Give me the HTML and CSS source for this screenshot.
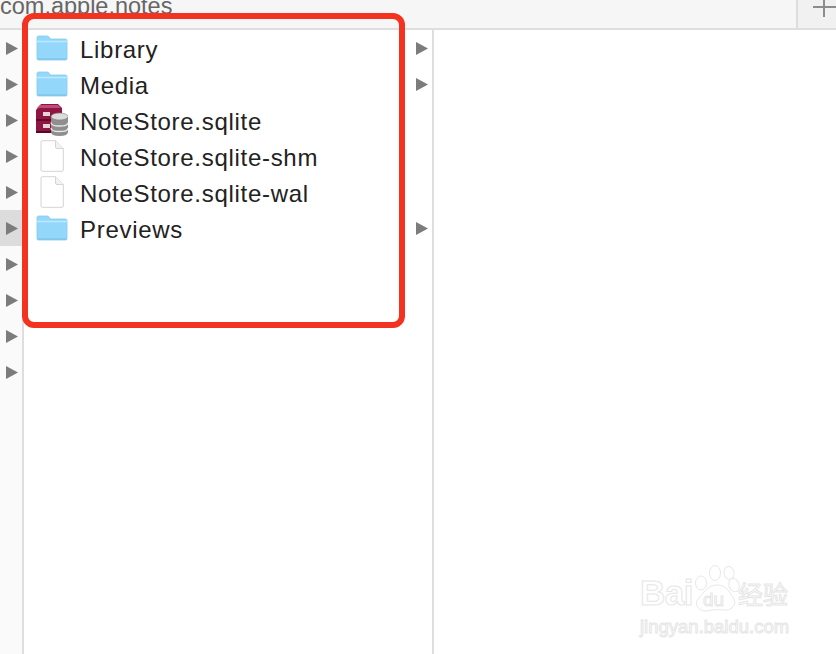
FILE: index.html
```html
<!DOCTYPE html>
<html>
<head>
    <meta charset="utf-8">
    <title>com.apple.notes</title>
    <link rel="stylesheet" href="styles.css">
</head>
<body>
    <svg class="sprites" width="0" height="0">
        <symbol id="arrow" viewBox="0 0 12 13"><path d="M0 0L12 6.5L0 13Z" fill="#7c7c7c"/></symbol>
        <symbol id="folder" viewBox="0 0 32 26">
            <path d="M1 5V2.5Q1 1 2.5 1H11Q12.500 1 13.500 2.500L14.500 4H29.500Q31 4 31 5.500V23.500Q31 25 29.500 25H2.500Q1 25 1 23.500Z" fill="#93d8fb" stroke="#84cbee" stroke-width=".8"/>
            <path d="M1 6.500H31" stroke="#bde9fd" stroke-width="1.500"/>
            <path d="M1.500 24H30.500" stroke="#75bfe2" stroke-width="1"/>
        </symbol>
        <symbol id="doc" viewBox="0 0 24 32">
            <path d="M1 2Q1 .7 2.300 .7H15.500L23.300 8.500V30Q23.300 31.300 22 31.300H2.300Q1 31.300 1 30Z" fill="#fff" stroke="#d4d4d4"/>
            <path d="M15.500 .7V7Q15.500 8.500 17 8.500H23.300" fill="#f2f2f2" stroke="#d4d4d4"/>
        </symbol>
        <symbol id="database" viewBox="0 0 32 32">
            <path d="M0 6L5 0H22L26 4V29H0Z" fill="#8f1643"/>
            <path d="M4 1H22L25 4H1Z" fill="#c24a76"/>
            <path d="M0 16H26" stroke="#560825" stroke-width="1.500"/>
            <path d="M0 27H26V29H0Z" fill="#560825"/>
            <rect x="7" y="8" width="7" height="4" fill="#ecd0da"/>
            <rect x="7" y="20" width="7" height="4" fill="#ecd0da"/>
            <path d="M15 13V28Q15 32 23.500 32T32 28V13Z" fill="#8f8f8f"/>
            <ellipse cx="23.500" cy="12.500" rx="8.500" ry="3.500" fill="#dcdcdc" stroke="#808080" stroke-width=".6"/>
            <path d="M15 18.500Q15 22 23.500 22T32 18.500M15 24Q15 27.500 23.500 27.500T32 24" fill="none" stroke="#e8e8e8" stroke-width="1.300"/>
        </symbol>
    </svg>

    <div class="window">
        <div class="path-bar">
            <div class="path-name">com.apple.notes</div>
            <div class="add-cell"><span class="plus"></span></div>
        </div>
        <div class="columns">
            <div class="col col-parent">
                <div class="row"><svg class="arrow"><use href="#arrow"/></svg></div>
                <div class="row"><svg class="arrow"><use href="#arrow"/></svg></div>
                <div class="row"><svg class="arrow"><use href="#arrow"/></svg></div>
                <div class="row"><svg class="arrow"><use href="#arrow"/></svg></div>
                <div class="row"><svg class="arrow"><use href="#arrow"/></svg></div>
                <div class="row selected"><svg class="arrow"><use href="#arrow"/></svg></div>
                <div class="row"><svg class="arrow"><use href="#arrow"/></svg></div>
                <div class="row"><svg class="arrow"><use href="#arrow"/></svg></div>
                <div class="row"><svg class="arrow"><use href="#arrow"/></svg></div>
                <div class="row"><svg class="arrow"><use href="#arrow"/></svg></div>
            </div>
            <div class="col col-files">
                <div class="row file">
                    <svg class="icon"><use href="#folder"/></svg>
                    <span class="name">Library</span>
                    <svg class="arrow"><use href="#arrow"/></svg>
                </div>
                <div class="row file">
                    <svg class="icon"><use href="#folder"/></svg>
                    <span class="name">Media</span>
                    <svg class="arrow"><use href="#arrow"/></svg>
                </div>
                <div class="row file">
                    <svg class="icon icon-tall"><use href="#database"/></svg>
                    <span class="name">NoteStore.sqlite</span>
                </div>
                <div class="row file">
                    <svg class="icon icon-tall"><use href="#doc"/></svg>
                    <span class="name">NoteStore.sqlite-shm</span>
                </div>
                <div class="row file">
                    <svg class="icon icon-tall"><use href="#doc"/></svg>
                    <span class="name">NoteStore.sqlite-wal</span>
                </div>
                <div class="row file">
                    <svg class="icon"><use href="#folder"/></svg>
                    <span class="name">Previews</span>
                    <svg class="arrow"><use href="#arrow"/></svg>
                </div>
            </div>
            <div class="col col-empty"></div>
        </div>
    </div>

    <!-- 红框标注 -->
    <div class="highlight-box"></div>

    <!-- 水印 -->
    <div class="watermark">
        <div class="wm-top">
            <span class="wm-bai">Bai</span>
            <span class="wm-paw">
                <svg width="52" height="52" viewBox="0 0 52 52">
                    <g fill="#fff" stroke="#e8e8e8" stroke-width="1">
                        <ellipse cx="11" cy="20" rx="5.500" ry="7"/>
                        <ellipse cx="25" cy="10" rx="5.500" ry="7.500"/>
                        <ellipse cx="39" cy="10" rx="5" ry="6.500" transform="rotate(-10 39 10)"/>
                        <ellipse cx="44" cy="22" rx="5" ry="7" transform="rotate(-20 44 22)"/>
                        <path d="M27 22C37 22 40 30 44 36C47 42 41 48 34 47C28 46 22 47 16 48C8 48 4 41 8 36C13 31 17 22 27 22Z"/>
                    </g>
                </svg>
                <span class="wm-du">du</span>
            </span>
            <span class="wm-cn">经验</span>
        </div>
        <div class="wm-url">jingyan.baidu.com</div>
    </div>
</body>
</html>
```

FILE: styles.css
```css
body {
    margin: 0;
    height: 654px;
    overflow: hidden;
    background: #fff;
    font-family: "Liberation Sans", "Noto Sans CJK SC", sans-serif;
    color: #222;
}
.sprites {
    position: absolute;
}
.window {
    display: flex;
    flex-direction: column;
    height: 654px;
}
.path-bar {
    display: flex;
    height: 28px;
    flex-shrink: 0;
    background: #f6f6f6;
    border-bottom: 2px solid #dedede;
    overflow: hidden;
}
.path-name {
    flex: 1;
    margin-top: -8px;
    font-size: 23.500px;
    line-height: 28px;
    color: #666;
}
.add-cell {
    width: 38px;
    background: #f1f1f1;
    border-left: 2px solid #dedede;
    display: flex;
    justify-content: flex-end;
}
.plus {
    position: relative;
    width: 23px;
    height: 17px;
}
.plus::before,
.plus::after {
    content: "";
    position: absolute;
    background: #8c8c8c;
}
.plus::before {
    left: 0;
    right: 0;
    top: 6px;
    height: 2px;
}
.plus::after {
    left: 10px;
    top: 0;
    width: 2px;
    height: 17px;
}
.columns {
    display: flex;
    flex: 1;
}
.col-parent {
    width: 22px;
    flex-shrink: 0;
    background: #fafafa;
    border-right: 2px solid #dedede;
}
.col-files {
    width: 408px;
    flex-shrink: 0;
    border-right: 2px solid #dedede;
}
.col-empty {
    flex: 1;
}
.row {
    display: flex;
    align-items: center;
    height: 36px;
}
.col-parent .row {
    padding-left: 6px;
}
.col-parent .row.selected {
    background: #dcdcdc;
}
.arrow {
    width: 12px;
    height: 13px;
    flex-shrink: 0;
}
.file {
    padding: 0 4px 0 12px;
}
.icon {
    width: 32px;
    height: 26px;
    flex-shrink: 0;
}
.icon-tall {
    height: 32px;
}
.name {
    flex: 1;
    margin-left: 12px;
    padding-top: 3px;
    font-size: 24px;
    letter-spacing: .7px;
    color: #222;
}
.highlight-box {
    position: absolute;
    left: 22px;
    top: 13px;
    width: 371px;
    height: 303px;
    border: 6px solid #f3321f;
    border-radius: 12px;
}
.watermark {
    position: absolute;
    left: 640px;
    top: 563px;
    width: 152px;
    color: #fff;
    -webkit-text-stroke: 1px #e6e6e6;
}
.wm-top {
    display: flex;
    align-items: flex-end;
    height: 52px;
}
.wm-bai {
    font-size: 35px;
    font-weight: bold;
    line-height: 44px;
    letter-spacing: -.5px;
    width: 50px;
}
.wm-paw {
    position: relative;
    width: 48px;
    height: 52px;
    flex-shrink: 0;
}
.wm-paw svg {
    display: block;
}
.wm-du {
    position: absolute;
    left: 13px;
    top: 27px;
    font-size: 19px;
    line-height: 20px;
}
.wm-cn {
    font-size: 25px;
    line-height: 40px;
    white-space: nowrap;
}
.wm-url {
    margin-top: 2px;
    font-size: 18.500px;
    line-height: 20px;
    white-space: nowrap;
}
```
